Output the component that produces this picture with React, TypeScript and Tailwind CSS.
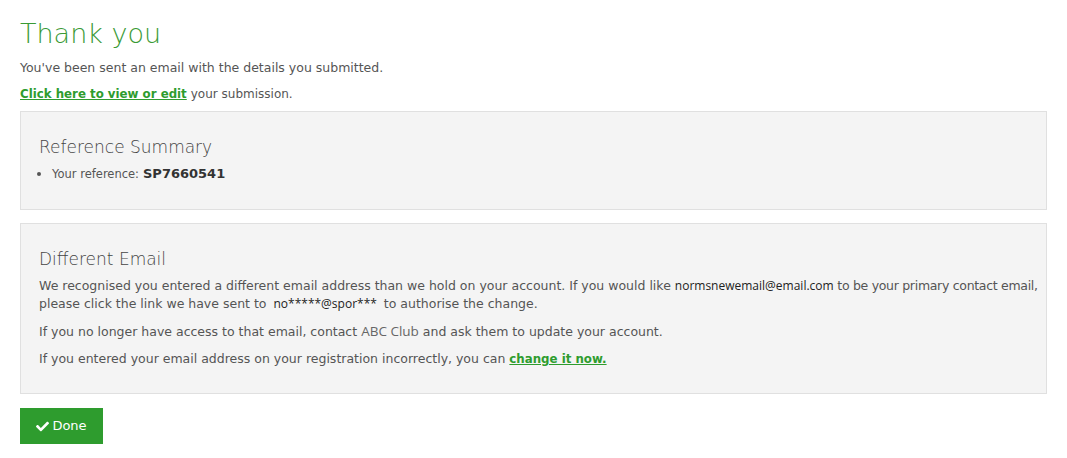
import React from 'react'
import { FaCheck } from 'react-icons/fa'

const body = "font-['DejaVu_Sans',sans-serif]"
const plain = "font-['Open_Sans',sans-serif] leading-[18px]"

export default function App() {
  return (
    <div className={`min-h-[458px] bg-white px-5 pt-[14px] text-[12.5px] text-[#555] ${body}`}>
      <h1 className="text-[27px] font-extralight leading-[40px] text-[#3a9a35]">Thank you</h1>
      <p className="mt-[5px] leading-[18px]">You've been sent an email with the details you submitted.</p>
      <p className="mt-[8px] leading-[18px]">
        <a href="#" className="text-[11.8px] font-bold text-[#2e9c2e] underline">Click here to view or edit</a>{' '}
        <span className="text-[12px]">your submission.</span>
      </p>

      <section className="mt-[8px] border border-[#e0e0e0] bg-[#f4f4f4] pl-[18px] pr-[4px] pb-[26px] pt-[24px]">
        <h2 className="text-[17px] font-light leading-[22px] text-[#444]">Reference Summary</h2>
        <ul className="mt-[7px] list-disc pl-[13px] leading-[18px]">
          <li>
            <span className="text-[11.5px]">Your reference:</span>{' '}
            <strong className="text-[13px] font-bold text-[#333]">SP7660541</strong>
          </li>
        </ul>
      </section>

      <section className="mt-[13px] border border-[#e0e0e0] bg-[#f4f4f4] pl-[18px] pr-[4px] pb-[25px] pt-[24px]">
        <h2 className="text-[17px] font-light leading-[22px] text-[#444]">Different Email</h2>
        <p className="mt-[7px] leading-[18px]">
          <span>We recognised you entered a different email address than we hold on your account. If you would like </span>
          <span className={`${plain} text-[12px] text-[#222]`}>normsnewemail@email.com</span>
          <span className="tracking-[-0.3px]"> to be your primary contact email,</span>
          <br />
          <span>please click the link we have sent to </span>
          <span className={`${plain} mx-[3px] text-[12px] text-[#222]`}>no*****@spor***</span>
          <span> to authorise the change.</span>
        </p>
        <p className="mt-[9px] leading-[18px]">
          If you no longer have access to that email, contact{' '}
          <span className={`${plain} text-[13.5px] text-[#666]`}>ABC Club</span> and ask them to update your account.
        </p>
        <p className="mt-[9px] leading-[18px]">
          If you entered your email address on your registration incorrectly, you can{' '}
          <a href="#" className="text-[11.8px] font-bold text-[#2e9c2e] underline">change it now.</a>
        </p>
      </section>

      <button className="mt-[14px] flex h-[36px] w-[83px] items-center justify-center gap-[3px] bg-[#2e9c2e] text-[13px] text-white">
        <FaCheck className="h-[13px] w-[13px]" />
        Done
      </button>
    </div>
  )
}
